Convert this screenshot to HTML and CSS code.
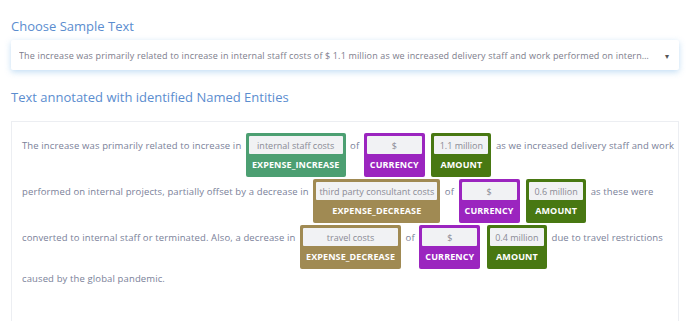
FILE: index.html
```html
<!DOCTYPE html>
<html lang="en">
<head>
    <meta charset="UTF-8">
    <meta name="viewport" content="width=device-width, initial-scale=1.0">
    <title>Named Entities</title>
    <link rel="stylesheet" href="styles.css">
</head>
<body>

<section class="panel">
    <h2 class="title">Choose Sample Text</h2>
    <div class="select">
        <span class="select-text">The increase was primarily related to increase in internal staff costs of $ 1.1 million as we increased delivery staff and work performed on internal projects, partially offset by a decrease in third party consultant costs</span>
        <span class="caret">&#9662;</span>
    </div>

    <h2 class="title">Text annotated with identified Named Entities</h2>
    <div class="annotated">
        <p>
            The increase was primarily related to increase in
            <span class="ent inc"><span class="val">internal staff costs</span><span class="lbl">EXPENSE_INCREASE</span></span>
            of
            <span class="ent cur"><span class="val">$</span><span class="lbl">CURRENCY</span></span>
            <span class="ent amt"><span class="val">1.1 million</span><span class="lbl">AMOUNT</span></span>
            as we increased delivery staff and work<br>
            performed on internal projects, partially offset by a decrease in
            <span class="ent dec"><span class="val">third party consultant costs</span><span class="lbl">EXPENSE_DECREASE</span></span>
            of
            <span class="ent cur"><span class="val">$</span><span class="lbl">CURRENCY</span></span>
            <span class="ent amt"><span class="val">0.6 million</span><span class="lbl">AMOUNT</span></span>
            as these were<br>
            converted to internal staff or terminated. Also, a decrease in
            <span class="ent dec"><span class="val">travel costs</span><span class="lbl">EXPENSE_DECREASE</span></span>
            of
            <span class="ent cur"><span class="val">$</span><span class="lbl">CURRENCY</span></span>
            <span class="ent amt"><span class="val">0.4 million</span><span class="lbl">AMOUNT</span></span>
            due to travel restrictions<br>
            caused by the global pandemic.
        </p>
    </div>
</section>

</body>
</html>
```

FILE: styles.css
```css
html { overflow: hidden; }
body { margin: 0; background-color: #ffffff; font-family: "Open Sans", "Noto Sans", sans-serif; }
.panel { padding: 17px 10px 0 11px; }
.title { margin: 0 0 5px 0; font-size: 13px; font-weight: 500; color: #5b8dcf; }
.select { display: flex; align-items: center; height: 30px; padding: 0 10px 0 8px; margin-bottom: 18px; background-color: #fff; box-shadow: 0 2px 6px rgba(120, 180, 230, 0.45); border-radius: 2px; }
.select-text { flex: 1; font-size: 9px; letter-spacing: 0.15px; color: #7d7d8c; white-space: nowrap; overflow: hidden; text-overflow: ellipsis; }
.caret { margin-left: 14px; font-size: 8px; color: #555; }
.annotated { border: 1px solid #eceef2; border-bottom: none; height: 200px; margin-top: 15px; padding: 10px 10px 0 10px; }
.annotated p { margin: 0; font-size: 9.5px; letter-spacing: 0.12px; line-height: 18px; color: #7a8199; white-space: nowrap; }
.ent { display: inline-flex; flex-direction: column; margin: 1px 2px; padding: 3px 3px 0 3px; border-radius: 2px; line-height: normal; vertical-align: baseline; }
.val { background-color: #f1f2f4; color: #8a8a95; font-size: 9px; letter-spacing: 0; text-align: center; padding: 2.5px 3px; min-width: 48px; border-radius: 1px; }
.lbl { color: #fff; font-weight: 700; font-size: 9px; letter-spacing: 0.1px; text-align: center; padding: 4px 3px 6px 3px; }
.inc { background-color: #4c9f72; }
.cur { background-color: #9b25bf; }
.amt { background-color: #487812; }
.dec { background-color: #a08a53; }
```
